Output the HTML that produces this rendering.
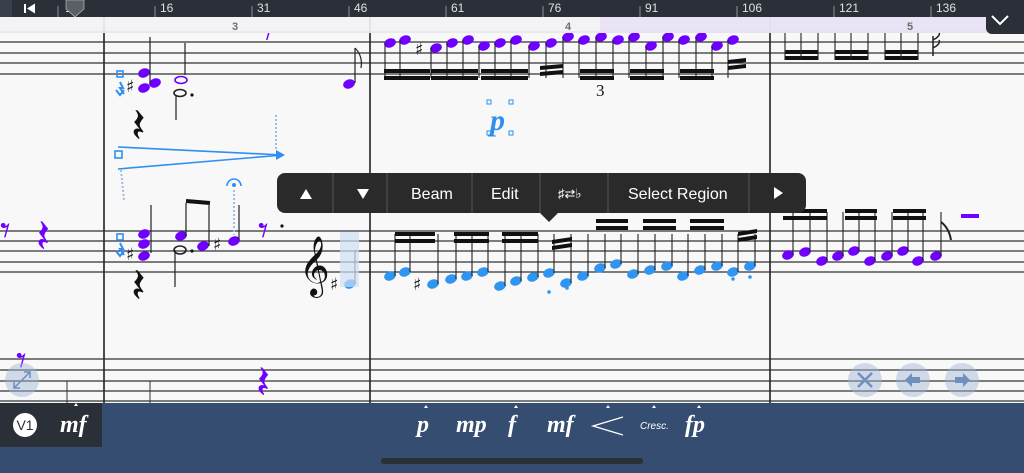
<!DOCTYPE html>
<html><head><meta charset="utf-8"><style>
html,body{margin:0;padding:0;width:1024px;height:473px;overflow:hidden;background:#f7f7f7;font-family:"Liberation Sans",sans-serif}
svg{position:absolute;left:0;top:0}
</style></head><body>
<svg id="s" width="1024" height="473" viewBox="0 0 1024 473" xmlns="http://www.w3.org/2000/svg">
<rect width="1024" height="473" fill="#f8f8f8"/>
<g id="staff" stroke="#333" stroke-width="1.2">
<line x1="0" y1="32" x2="1024" y2="32"/><line x1="0" y1="42" x2="1024" y2="42"/><line x1="0" y1="53" x2="1024" y2="53"/><line x1="0" y1="63" x2="1024" y2="63"/><line x1="0" y1="74" x2="1024" y2="74"/>
<line x1="0" y1="231" x2="1024" y2="231"/><line x1="0" y1="241" x2="1024" y2="241"/><line x1="0" y1="251" x2="1024" y2="251"/><line x1="0" y1="262" x2="1024" y2="262"/><line x1="0" y1="272" x2="1024" y2="272"/>
<line x1="0" y1="359" x2="1024" y2="359"/><line x1="0" y1="370" x2="1024" y2="370"/><line x1="0" y1="381" x2="1024" y2="381"/><line x1="0" y1="391" x2="1024" y2="391"/><line x1="0" y1="401" x2="1024" y2="401"/>
</g>
<g stroke="#222" stroke-width="1.6"><line x1="104" y1="17" x2="104" y2="403"/><line x1="370" y1="17" x2="370" y2="403"/><line x1="770" y1="17" x2="770" y2="403"/></g>
<g stroke="#333" stroke-width="1"><line x1="67" y1="381" x2="67" y2="403"/><line x1="150" y1="381" x2="150" y2="403"/></g>
<g id="notes"></g>
<g fill="#6f00ff">
<ellipse cx="144" cy="73" rx="6" ry="4.5" transform="rotate(-20 144 73)"/><ellipse cx="155" cy="83" rx="6" ry="4.5" transform="rotate(-20 155 83)"/><ellipse cx="144" cy="88" rx="6" ry="4.5" transform="rotate(-20 144 88)"/>
<ellipse cx="349" cy="84" rx="6" ry="4.5" transform="rotate(-20 349 84)"/>
<path d="M268 33 l-2 7 h1.5 l2-7z"/>
<ellipse cx="144" cy="234" rx="6" ry="4.5" transform="rotate(-20 144 234)"/><ellipse cx="144" cy="244" rx="6" ry="4.5" transform="rotate(-20 144 244)"/><ellipse cx="144" cy="256" rx="6" ry="4.5" transform="rotate(-20 144 256)"/>
<ellipse cx="181" cy="236" rx="6" ry="4.5" transform="rotate(-20 181 236)"/><ellipse cx="203" cy="246" rx="6" ry="4.5" transform="rotate(-20 203 246)"/><ellipse cx="234" cy="241" rx="6" ry="4.5" transform="rotate(-20 234 241)"/>
<text x="258" y="244" font-size="40" font-family="DejaVu Sans" fill="#6f00ff">𝄾</text>
<text x="0" y="244" font-size="40" font-family="DejaVu Sans" fill="#6f00ff">𝄾</text>
<text x="36" y="252" font-size="46" font-family="DejaVu Sans" fill="#6f00ff">𝄽</text>
<text x="16" y="374" font-size="40" font-family="DejaVu Sans" fill="#6f00ff">𝄾</text>
<text x="256" y="398" font-size="46" font-family="DejaVu Sans" fill="#6f00ff">𝄽</text>
<rect x="961" y="214" width="18" height="4"/>
</g>
<g stroke="#222" stroke-width="1.2" fill="none">
<line x1="150" y1="37" x2="150" y2="84"/><line x1="185" y1="43" x2="185" y2="75"/><line x1="176" y1="95" x2="176" y2="120"/>
<line x1="355" y1="48" x2="355" y2="83"/><path d="M355 48 q8 8 6 20"/>
<line x1="151" y1="205" x2="151" y2="253"/><line x1="186" y1="203" x2="186" y2="236"/><line x1="209" y1="205" x2="209" y2="246"/><line x1="239" y1="205" x2="239" y2="240"/><line x1="175" y1="250" x2="175" y2="287"/>
<ellipse cx="181" cy="80" rx="6" ry="3.5" stroke="#6f00ff" stroke-width="1.6"/>
<ellipse cx="180" cy="93" rx="6" ry="3.5" stroke-width="1.6"/>
<ellipse cx="180" cy="250" rx="6" ry="4" stroke-width="1.6"/>
</g>
<rect x="186" y="200" width="24" height="4" fill="#111" transform="rotate(5 198 202)"/>
<g fill="#111"><circle cx="192" cy="95" r="1.6"/><circle cx="192" cy="251" r="1.6"/><circle cx="282" cy="226" r="1.6"/></g>
<g font-family="DejaVu Sans" fill="#111">
<text x="126" y="92" font-size="17">♯</text><text x="126" y="260" font-size="17">♯</text><text x="213" y="250" font-size="17">♯</text><text x="415" y="55" font-size="17">♯</text><text x="413" y="290" font-size="17">♯</text><text x="330" y="290" font-size="17">♯</text>
<text x="131" y="142" font-size="48">𝄽</text><text x="131" y="302" font-size="48">𝄽</text>
<text x="299" y="283" font-size="52">𝄞</text>
</g>
<text x="596" y="96" font-family="Liberation Serif" font-size="17" fill="#111">3</text>
<rect x="340" y="232" width="19" height="55" fill="#cfe0f5" opacity=".7"/>
<g stroke="#2f8ff0" fill="none" stroke-width="1.6">
<line x1="118" y1="147" x2="283" y2="155"/><line x1="118" y1="169" x2="283" y2="155"/>
<rect x="115" y="151" width="7" height="7"/><rect x="117" y="71" width="6" height="6"/><rect x="117" y="234" width="6" height="6"/>
<path d="M227 186 a7 7 0 0 1 14 0"/>
<rect x="487" y="100" width="4" height="4" stroke-width="1"/><rect x="509" y="100" width="4" height="4" stroke-width="1"/><rect x="487" y="131" width="4" height="4" stroke-width="1"/><rect x="509" y="131" width="4" height="4" stroke-width="1"/>
</g>
<path d="M276 150 l9 5 -9 5z" fill="#2f8ff0"/><circle cx="234" cy="185" r="2" fill="#2f8ff0"/>
<g stroke="#9fbce0" stroke-width="2" stroke-dasharray="2 2"><line x1="276" y1="115" x2="276" y2="150"/><line x1="121" y1="170" x2="124" y2="200"/><line x1="234" y1="190" x2="234" y2="235"/></g>
<path d="M120 82 l3 6 -3 0 4 6 M116 90 l4 5 4-5" stroke="#2f8ff0" stroke-width="2" fill="none"/>
<path d="M120 243 l3 6 -3 0 4 6 M116 251 l4 5 4-5" stroke="#2f8ff0" stroke-width="2" fill="none"/>
<text x="490" y="130" font-family="Liberation Serif" font-size="30" font-style="italic" font-weight="bold" fill="#2f8ff0">p</text>
<rect x="0" y="0" width="1024" height="17" fill="#2b2f38"/>
<rect x="0" y="0" width="12" height="17" fill="#3a404b"/>
<rect x="0" y="17" width="1024" height="16" fill="#f2f2f4" opacity=".92"/>
<rect x="600" y="17" width="400" height="16" fill="#e6dcf5" opacity=".7"/>
<g fill="#6e6e6e" font-size="11" font-weight="bold"><text x="232" y="30">3</text><text x="565" y="30">4</text><text x="907" y="30">5</text></g>
<path d="M24 4 v9 h2 v-9z M27 8.5 l8-5 v10z" fill="#fff"/>
<g stroke="#8a8f99" stroke-width="1"><line x1="58" y1="6" x2="58" y2="17"/><line x1="155" y1="6" x2="155" y2="17"/><line x1="252" y1="6" x2="252" y2="17"/><line x1="349" y1="6" x2="349" y2="17"/><line x1="446" y1="6" x2="446" y2="17"/><line x1="543" y1="6" x2="543" y2="17"/><line x1="640" y1="6" x2="640" y2="17"/><line x1="737" y1="6" x2="737" y2="17"/><line x1="834" y1="6" x2="834" y2="17"/><line x1="931" y1="6" x2="931" y2="17"/></g>
<g fill="#e0e0e0" font-size="12"><text x="65" y="12">1</text><text x="160" y="12">16</text><text x="257" y="12">31</text><text x="354" y="12">46</text><text x="451" y="12">61</text><text x="548" y="12">76</text><text x="645" y="12">91</text><text x="742" y="12">106</text><text x="839" y="12">121</text><text x="936" y="12">136</text></g>
<path d="M66 0 h18 v9 l-9 8 -9-8z" fill="#5a5e66" stroke="#ccc" stroke-width=".6"/>
<path d="M986 17 h38 v17 h-32 a6 6 0 0 1 -6-6z" fill="#2b2f38"/><path d="M990 0 h34 v17 h-34z" fill="#2b2f38"/>
<path d="M992 16 l8 8 8-8" stroke="#fff" stroke-width="2" fill="none"/>
<rect x="277" y="173" width="529" height="40" rx="8" fill="#2a2a2a"/>
<path d="M540 213 l9 9 9-9z" fill="#2a2a2a"/>
<g stroke="#555" stroke-width="1"><line x1="333" y1="173" x2="333" y2="213"/><line x1="387" y1="173" x2="387" y2="213"/><line x1="472" y1="173" x2="472" y2="213"/><line x1="540" y1="173" x2="540" y2="213"/><line x1="608" y1="173" x2="608" y2="213"/><line x1="749" y1="173" x2="749" y2="213"/></g>
<g fill="#fff" font-size="16"><path d="M300 199 l6-10 6 10z"/><path d="M357 189 l6 10 6-10z"/><text x="411" y="199">Beam</text><text x="491" y="199">Edit</text><text x="558" y="198" font-size="13">♯⇄♭</text><text x="628" y="199">Select Region</text><path d="M774 187 l9 6 -9 6z"/></g>
<g fill="#9fb4d3" opacity=".45"><circle cx="22" cy="380" r="17"/><circle cx="865" cy="380" r="17"/><circle cx="913" cy="380" r="17"/><circle cx="962" cy="380" r="17"/></g>
<g stroke="#6f8fbf" stroke-width="2.5" fill="none"><path d="M858 373 l14 14 M872 373 l-14 14"/><path d="M14 388 l16-16 M14 382 v6 h6 M30 378 v-6 h-6" stroke-width="1.5"/></g>
<path d="M905 380 l7-7 v4 h8 v6 h-8 v4z" fill="#6f8fbf"/><path d="M970 380 l-7-7 v4 h-8 v6 h8 v4z" fill="#6f8fbf"/>
<rect x="0" y="403" width="1024" height="70" fill="#344d70"/>
<rect x="0" y="403" width="102" height="44" fill="#2a2f38"/>
<circle cx="25" cy="425" r="12" fill="#fff"/><text x="25" y="430" font-size="14" text-anchor="middle" fill="#2a2f38">V1</text>
<g fill="#fff" font-family="Liberation Serif" font-style="italic" font-weight="bold" font-size="24">
<text x="60" y="432">mf</text><text x="417" y="432">p</text><text x="456" y="432">mp</text><text x="508" y="432">f</text><text x="547" y="432">mf</text><text x="685" y="432">fp</text>
<text x="640" y="429" font-family="Liberation Sans" font-weight="normal" font-size="10">Cresc.</text>
</g>
<path d="M623 417 l-30 9 30 9" stroke="#fff" stroke-width="1.3" fill="none"/>
<g fill="#fff"><path d="M74 406 l2-3 2 3z"/><path d="M424 408 l2-3 2 3z"/><path d="M514 408 l2-3 2 3z"/><path d="M606 408 l2-3 2 3z"/><path d="M652 408 l2-3 2 3z"/><path d="M697 408 l2-3 2 3z"/></g>
<rect x="381" y="458" width="262" height="6" rx="3" fill="#2b2f38"/>
</svg>
<script>
var g=document.getElementById('notes'),NS='http://www.w3.org/2000/svg';
function el(t,a){var e=document.createElementNS(NS,t);for(var k in a)e.setAttribute(k,a[k]);g.appendChild(e);return e}
function head(x,y,c){el('ellipse',{cx:x,cy:y,rx:6,ry:4.5,fill:c,transform:'rotate(-20 '+x+' '+y+')'})}
function beam(x1,x2,y1,y2){el('polygon',{points:x1+','+y1+' '+x2+','+y2+' '+x2+','+(y2+4)+' '+x1+','+(y1+4),fill:'#111'})}
var P='#6f00ff',B='#2f95f0';
var tx=[390,405,436,452,468,484,500,516,534,551,568,584,601,618,634,651,668,684,701,717,733],
ty=[43,40,48,43,40,46,43,40,46,43,37,40,37,40,37,46,37,40,37,46,40];
for(var i=0;i<tx.length;i++){head(tx[i],ty[i],P);el('line',{x1:tx[i]-5,y1:ty[i],x2:tx[i]-5,y2:78,stroke:'#222','stroke-width':1.1})}
[[384,430],[431,478],[481,528],[580,614],[630,664],[680,714]].forEach(function(b){beam(b[0],b[1],69,69);beam(b[0],b[1],76,76)});
beam(540,563,72,70);beam(540,563,66,64);beam(728,746,66,64);beam(728,746,60,58);
[[785,818],[835,868],[885,918]].forEach(function(b){beam(b[0],b[1],50,50);beam(b[0],b[1],56,56)});
[785,801,818,835,851,868,885,901,918].forEach(function(x){el('line',{x1:x,y1:33,x2:x,y2:60,stroke:'#222','stroke-width':1.1})});
el('path',{d:'M933 36 l0 20 M933 40 q8 -4 6 -8 M933 48 q8 -4 6 -8',stroke:'#222',fill:'none','stroke-width':1.5});
var mx=[390,405,433,451,467,483,500,516,533,549,566,583,600,616,633,650,667,683,700,717,733,750],
my=[276,272,284,279,276,272,286,281,277,273,283,276,268,264,274,270,266,276,270,266,272,266];
for(i=0;i<mx.length;i++){head(mx[i],my[i],B);el('line',{x1:mx[i]+5,y1:my[i],x2:mx[i]+5,y2:234,stroke:'#222','stroke-width':1.1})}
head(350,284,B);el('line',{x1:355,y1:284,x2:355,y2:250,stroke:'#222'});
[[395,435],[454,489],[502,538],[596,628],[643,676],[690,724]].forEach(function(b,j){var y=j<3?232:219;beam(b[0],b[1],y,y);beam(b[0],b[1],y+7,y+7)});
beam(552,572,240,237);beam(552,572,246,243);beam(738,757,232,229);beam(738,757,238,235);
[[549,292],[567,288],[733,279],[750,277]].forEach(function(p){el('circle',{cx:p[0],cy:p[1],r:1.8,fill:B})});
var px=[788,805,822,838,854,870,887,903,918,936],py=[255,252,261,256,251,261,256,251,261,256];
for(i=0;i<px.length;i++){head(px[i],py[i],P);el('line',{x1:px[i]+5,y1:py[i],x2:px[i]+5,y2:212,stroke:'#222','stroke-width':1.1})}
[[783,827],[845,877],[893,926]].forEach(function(b){beam(b[0],b[1],209,209);beam(b[0],b[1],216,216)});
el('path',{d:'M941 222 q8 6 10 18',stroke:'#222',fill:'none','stroke-width':2});
</script>
</body></html>
